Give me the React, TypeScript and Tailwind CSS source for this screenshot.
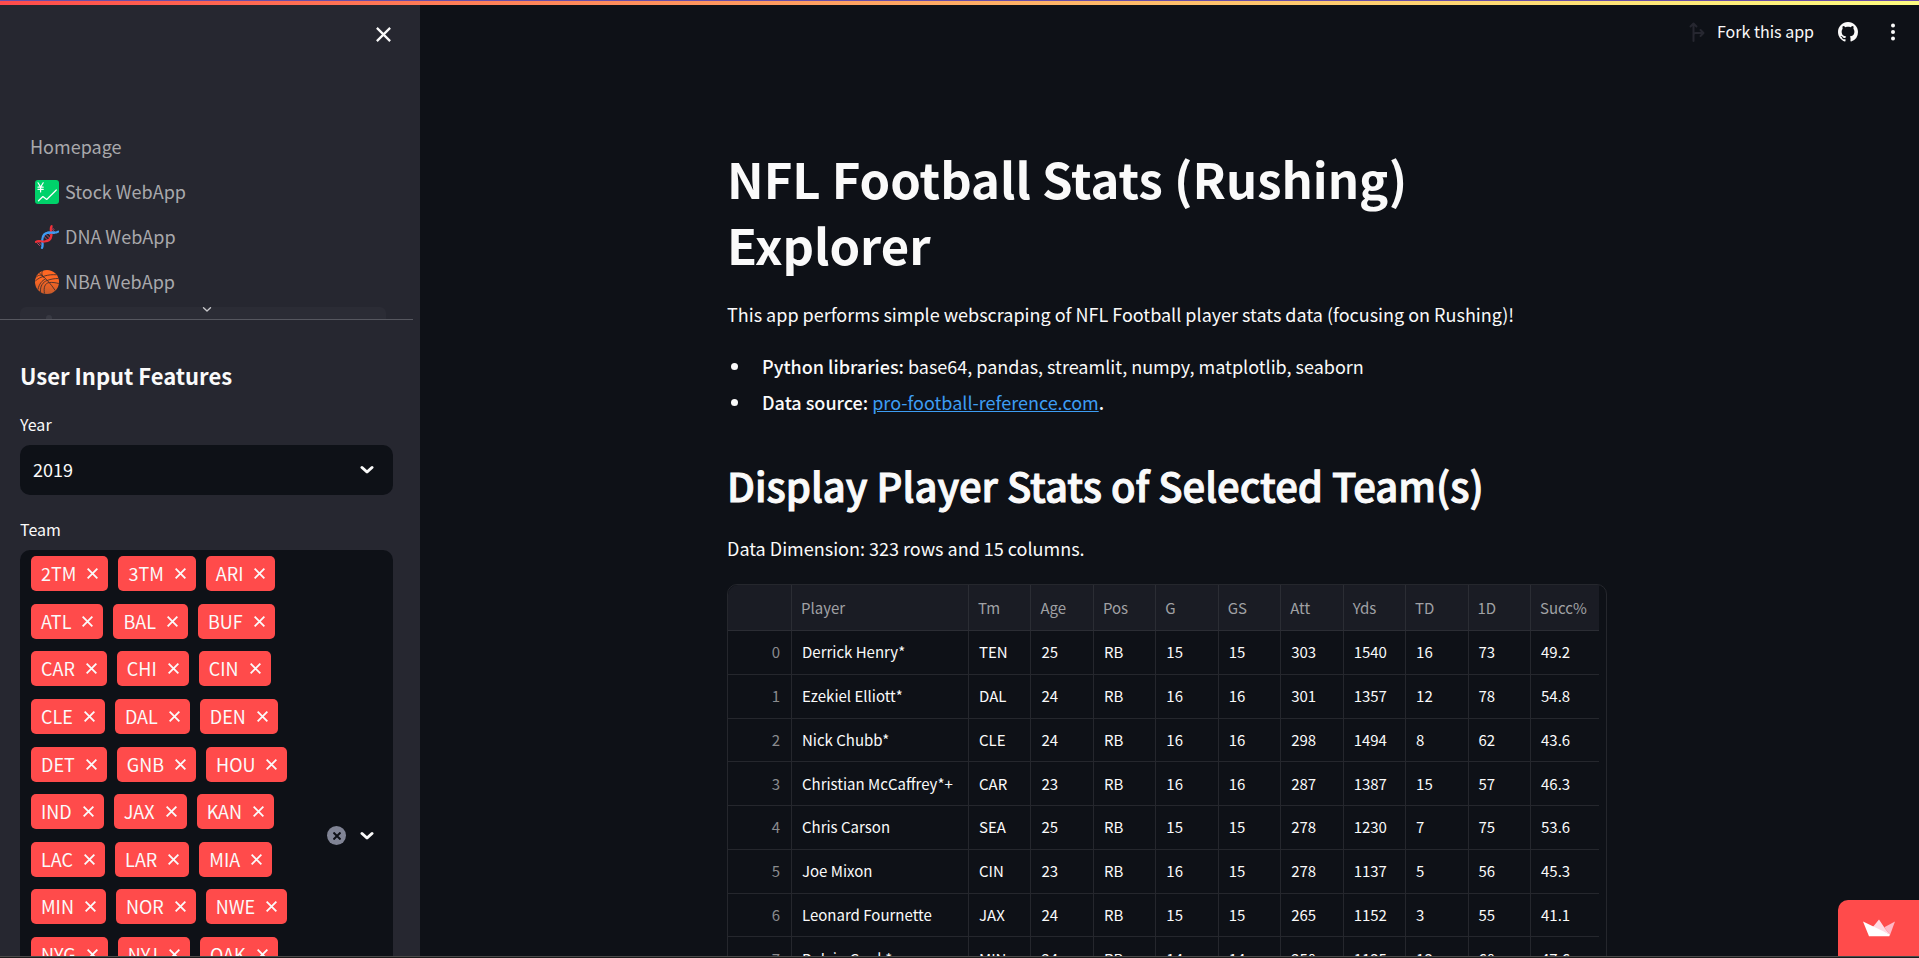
import type { ReactNode } from "react";

const teams = [
  "2TM", "3TM", "ARI", "ATL", "BAL", "BUF", "CAR", "CHI", "CIN", "CLE", "DAL", "DEN",
  "DET", "GNB", "HOU", "IND", "JAX", "KAN", "LAC", "LAR", "MIA", "MIN", "NOR", "NWE",
  "NYG", "NYJ", "OAK", "PHI", "PIT", "SEA", "SFO", "TAM", "TEN", "WAS",
];

const columns = ["Player", "Tm", "Age", "Pos", "G", "GS", "Att", "Yds", "TD", "1D", "Succ%"];

const players: (string | number)[][] = [
  ["Derrick Henry*", "TEN", 25, "RB", 15, 15, 303, 1540, 16, 73, "49.2"],
  ["Ezekiel Elliott*", "DAL", 24, "RB", 16, 16, 301, 1357, 12, 78, "54.8"],
  ["Nick Chubb*", "CLE", 24, "RB", 16, 16, 298, 1494, 8, 62, "43.6"],
  ["Christian McCaffrey*+", "CAR", 23, "RB", 16, 16, 287, 1387, 15, 57, "46.3"],
  ["Chris Carson", "SEA", 25, "RB", 15, 15, 278, 1230, 7, 75, "53.6"],
  ["Joe Mixon", "CIN", 23, "RB", 16, 15, 278, 1137, 5, 56, "45.3"],
  ["Leonard Fournette", "JAX", 24, "RB", 15, 15, 265, 1152, 3, 55, "41.1"],
  ["Dalvin Cook*", "MIN", 24, "RB", 14, 14, 250, 1135, 13, 60, "47.6"],
];

function Cross({ className, width = 2 }: { className: string; width?: number }) {
  return (
    <svg viewBox="0 0 12 12" className={className} fill="none" stroke="currentColor" strokeWidth={width} aria-hidden="true">
      <path d="M.7.7 11.300 11.300M11.300.7.7 11.300" />
    </svg>
  );
}

function Chevron({ className, width = 3 }: { className: string; width?: number }) {
  return (
    <svg viewBox="0 0 14 10" className={className} fill="none" stroke="currentColor" strokeWidth={width} strokeLinecap="round" strokeLinejoin="round" aria-hidden="true">
      <path d="M2 2.5 7 7 12 2.5" />
    </svg>
  );
}

function StockIcon() {
  return (
    <svg viewBox="0 0 24 24" className="size-6 shrink-0" aria-hidden="true">
      <rect width="24" height="24" rx="3" fill="#00d26a" />
      <path d="M3 2.8 5.6 7 8.2 2.8M5.6 7v5M3 7.2h5.2M3 9.4h5.2" fill="none" stroke="#fff" strokeWidth="1.2" strokeLinecap="round" />
      <path d="m3.5 20.8 4.4-4.3 3.8 3L21.3 10" fill="none" stroke="#fff" strokeWidth="1.2" strokeLinecap="round" strokeLinejoin="round" />
    </svg>
  );
}

function DnaIcon() {
  return (
    <svg viewBox="0 0 24 24" className="size-6 shrink-0" fill="none" strokeLinecap="round" aria-hidden="true">
      <path d="M3.200 16.800 7.200 20.800M2.500 18.500l2 2M5.800 16l2 2M8.600 11l4.600 4.600M10.500 9l4.600 4.600M13.500 8.300l2.500 2.500M16.200 3.500l4.300 4.300M16.500 6l2 2M17 2.500l2 2" stroke="#c04a66" strokeWidth="1" />
      <path d="M7 22.800C8.500 20.500 7 18 7.300 14.500 7.600 10.500 10 8 13.500 7.600 17 7.200 20.500 8.500 23.200 6.600" stroke="#3d9bf2" strokeWidth="2.200" />
      <path d="M1 16.800C3.500 15 6 16.800 9.500 16.500 13.500 16.200 16 13.800 16.400 10.500 16.800 7 14.500 4 16.600 1.200" stroke="#f03038" strokeWidth="2.200" />
      <path d="M12.500 7.800C14.800 7.200 17 7.700 19 7.800" stroke="#3d9bf2" strokeWidth="2.200" />
    </svg>
  );
}

function BasketballIcon() {
  return (
    <svg viewBox="0 0 24 24" className="size-6 shrink-0" aria-hidden="true">
      <defs>
        <linearGradient id="ball" x1="0" y1="0" x2="0" y2="1">
          <stop offset="0.4" stopColor="#ff6723" />
          <stop offset="1" stopColor="#c45a2b" />
        </linearGradient>
      </defs>
      <circle cx="12" cy="12" r="12" fill="url(#ball)" />
      <g fill="none" stroke="#45302c" strokeWidth="0.9">
        <path d="M4.300 3C10 7.500 16 14 20.300 20.600M.3 11C5 6.500 14 4 21.500 4.800M7.500 1C6.500 3 6.500 5 9 7.500M.8 7.500C3 5 6 4 9 7.500" />
        <path d="M3 19.500C4 14 7 10.500 10.500 9M9.500 23.500C8.500 18 9.500 13 14.500 12.500c3-.3 6 .2 9.300 1M5.500 22C5 16 8 12 12 10.500 16 9 20 8.500 23.300 8.500" />
      </g>
    </svg>
  );
}

function GithubIcon() {
  return (
    <svg viewBox="0 0 16 16" className="size-5" fill="currentColor" aria-hidden="true">
      <path d="M8 0C3.580 0 0 3.580 0 8c0 3.540 2.290 6.530 5.470 7.590.4.070.55-.17.55-.38 0-.19-.01-.82-.01-1.490-2.010.37-2.530-.49-2.690-.94-.09-.23-.48-.94-.82-1.130-.28-.15-.68-.52-.01-.53.63-.01 1.080.58 1.230.82.72 1.210 1.870.87 2.330.66.070-.52.28-.87.51-1.070-1.780-.2-3.640-.89-3.640-3.950 0-.87.31-1.590.82-2.150-.08-.2-.36-1.020.08-2.120 0 0 .67-.21 2.200.82.64-.18 1.320-.27 2-.27s1.360.09 2 .27c1.530-1.040 2.200-.82 2.200-.82.44 1.100.16 1.920.08 2.120.51.56.82 1.270.82 2.150 0 3.070-1.870 3.750-3.650 3.950.29.25.54.73.54 1.480 0 1.070-.01 1.930-.01 2.200 0 .21.15.46.55.38A8.010 8.010 0 0 0 16 8c0-4.420-3.580-8-8-8Z" />
    </svg>
  );
}

function NavItem({ icon, children }: { icon?: ReactNode; children: ReactNode }) {
  return (
    <li>
      <a href="#" className={`flex h-[45px] items-center text-[18px] leading-6 text-[#a9a9ac] ${icon ? "gap-[6px] pl-[35px]" : "pl-[30px]"}`}>
        {icon}
        <span className="pb-0.5">{children}</span>
      </a>
    </li>
  );
}

function Sidebar() {
  return (
    <aside className="flex w-[420px] shrink-0 flex-col bg-[#262730]">
      <div className="flex h-[119px] shrink-0 justify-end pt-[22px] pr-[29px]">
        <button type="button" aria-label="Close sidebar" className="size-[15px]">
          <Cross className="size-[15px]" width={1.8} />
        </button>
      </div>
      <nav className="relative mr-[7px] h-[196px] shrink-0 overflow-hidden border-b border-[#56575f]">
        <ul>
          <NavItem>Homepage</NavItem>
          <NavItem icon={<StockIcon />}>Stock WebApp</NavItem>
          <NavItem icon={<DnaIcon />}>DNA WebApp</NavItem>
          <NavItem icon={<BasketballIcon />}>NBA WebApp</NavItem>
        </ul>
        <div className="mt-[3px] mr-[27px] ml-5 h-10 overflow-hidden rounded-md bg-[#2b2c35] pt-2 pl-[26px]">
          <div className="size-[6px] rounded-full bg-[#383942]" />
        </div>
        <Chevron className="absolute bottom-[6px] left-[202px] h-[7px] w-[10px] text-[#c8c8cb]" width={2} />
      </nav>
      <div className="flex flex-col pr-[27px] pl-5">
        <h2 className="mt-[39px] text-[22px] leading-[32px] font-semibold">User Input Features</h2>
        <label htmlFor="year" className="mt-[22px] text-[16px] leading-[22px]">Year</label>
        <div className="relative mt-[10px]">
          <select id="year" defaultValue="2019" className="h-[50px] w-full appearance-none rounded-[10px] bg-[#0e1117] pb-0.5 pl-[13px] text-[18px] leading-6">
            <option>2019</option>
            <option>2018</option>
          </select>
          <Chevron className="pointer-events-none absolute top-[20px] right-[19px] h-[10px] w-[14px]" />
        </div>
        <div id="team-label" className="mt-[23px] text-[16px] leading-[22px]">Team</div>
        <div role="group" aria-labelledby="team-label" className="mt-[10px] flex h-[571px] items-center rounded-[10px] bg-[#0e1117] pr-[19px] pl-[11px]">
          <ul className="flex h-full flex-1 flex-wrap content-around gap-x-[10px]">
            {teams.map((team) => (
              <li key={team} className="flex h-[35px] items-center rounded-[5px] bg-[#ff4b4b] px-[10px] text-[18px] leading-6">
                <span className="pb-px">{team}</span>
                <button type="button" aria-label={`Remove ${team}`} className="ml-[11px]">
                  <Cross className="size-[11px]" />
                </button>
              </li>
            ))}
          </ul>
          <button type="button" aria-label="Clear all" className="grid size-[19px] place-items-center rounded-full bg-[#808495] text-[#0e1117]">
            <Cross className="size-[8px]" width={3} />
          </button>
          <button type="button" aria-label="Open team list" className="ml-[14px]">
            <Chevron className="h-[10px] w-[14px]" />
          </button>
        </div>
      </div>
    </aside>
  );
}

function Toolbar() {
  return (
    <header className="flex h-[54px] items-center justify-end pr-[18px]">
      <button type="button" className="flex items-center gap-[12px] text-[16px] leading-6">
        <svg viewBox="0 0 16 20" className="h-5 w-4 text-[#262730]" fill="none" stroke="currentColor" strokeWidth="2" strokeLinecap="round" strokeLinejoin="round" aria-hidden="true">
          <path d="M4.500 19V2M1.500 4.500 4.500 1.500 7.500 4.500M4.500 14.500V13q0-2 2-2H14M11.500 8 14.500 11 11.500 14" />
        </svg>
        <span className="pb-0.5">Fork this app</span>
      </button>
      <a href="#" aria-label="GitHub" className="ml-[24px]"><GithubIcon /></a>
      <button type="button" aria-label="Menu" className="ml-[27px]">
        <svg viewBox="0 0 16 18" className="h-[18px] w-4" fill="currentColor" aria-hidden="true">
          <circle cx="8" cy="2.500" r="2" /><circle cx="8" cy="9" r="2" /><circle cx="8" cy="15.500" r="2" />
        </svg>
      </button>
    </header>
  );
}

function StatsTable() {
  return (
    <div className="mt-[20px] rounded-[10px] border border-[#25272d] pr-[7px]">
      <table className="h-[396px] w-full table-fixed border-separate border-spacing-0 text-left text-[15px] leading-5">
        <colgroup>
          <col className="w-[64px]" />
          <col className="w-[177px]" />
          {columns.slice(2).map((c) => <col key={c} />)}
          <col className="w-[68px]" />
        </colgroup>
        <thead>
          <tr className="h-[46px] bg-[#1a1c24] text-[#a0a1a4]">
            <th aria-label="Row" className="rounded-tl-[10px] border-r border-b border-[#2b2d34]" />
            {columns.map((c) => (
              <th key={c} scope="col" className="border-r border-b border-[#2b2d34] px-[9px] font-normal whitespace-nowrap last:border-r-0">{c}</th>
            ))}
          </tr>
        </thead>
        <tbody>
          {players.map((row, i) => (
            <tr key={i}>
              <th scope="row" className="border-r border-b border-[#25272d] pr-[11px] text-right font-normal text-[#8a8b8e]">{i}</th>
              {row.map((value, j) => (
                <td key={j} className="border-r border-b border-[#25272d] px-[10px] whitespace-nowrap last:border-r-0">{value}</td>
              ))}
            </tr>
          ))}
        </tbody>
      </table>
    </div>
  );
}

function Bullet({ children }: { children: ReactNode }) {
  return (
    <li className="flex items-center gap-[24px] before:size-[7px] before:rounded-full before:bg-[#fafafa]">
      <span>{children}</span>
    </li>
  );
}

export default function App() {
  return (
    <div className="flex h-screen flex-col overflow-hidden bg-[#0e1117] font-['Noto_Sans_CJK_SC','Noto_Sans',sans-serif] text-[#fafafa]">
      <div className="h-px shrink-0 bg-[#6b4fa8]" />
      <div className="h-1 shrink-0 bg-linear-to-r from-[#ff4b4b] to-[#fffd80]" />
      <div className="flex min-h-0 flex-1 overflow-hidden">
        <Sidebar />
        <div className="min-w-0 flex-1">
          <Toolbar />
          <main className="pr-[5px]">
            <article className="mx-auto max-w-[880px] pt-[86px]">
              <h1 className="text-[49px] leading-[66px] font-bold">NFL Football Stats (Rushing) Explorer</h1>
              <p className="mt-[21px] text-[18px] leading-8">This app performs simple webscraping of NFL Football player stats data (focusing on Rushing)!</p>
              <ul className="mt-[20px] space-y-1 pl-1 text-[18px] leading-8">
                <Bullet><strong className="font-medium">Python libraries:</strong> base64, pandas, streamlit, numpy, matplotlib, seaborn</Bullet>
                <Bullet>
                  <strong className="font-medium">Data source: </strong>
                  <a href="https://www.pro-football-reference.com" className="text-[#3d9df3] underline">pro-football-reference.com</a>
                  <strong className="font-medium">.</strong>
                </Bullet>
              </ul>
              <h2 className="mt-[40px] text-[40px] leading-[54px] font-medium [-webkit-text-stroke:1px_#fafafa]">Display Player Stats of Selected Team(s)</h2>
              <p className="mt-[20px] text-[18px] leading-8">Data Dimension: 323 rows and 15 columns.</p>
              <StatsTable />
            </article>
          </main>
        </div>
      </div>
      <div className="h-px shrink-0 bg-[#4a4a4a]" />
      <div className="h-px shrink-0 bg-[#1c1c1c]" />
      <a href="#" aria-label="Hosted with Streamlit" className="fixed right-0 bottom-[2px] flex h-[56px] w-[81px] items-center justify-center rounded-tl-[10px] bg-[#ff4b4b]">
        <svg viewBox="0 0 32 18" className="h-[18px] w-8" aria-hidden="true">
          <path d="M16 .5 22 9.500 27 15.500 9 9Z" fill="#ffd9e2" />
          <path d="M32 2.500 27 16 21.300 8.200Z" fill="#ffb8c6" />
          <path d="M0 2.500 27 15.500 26.300 17.300H6Z" fill="#fff" />
        </svg>
      </a>
    </div>
  );
}
